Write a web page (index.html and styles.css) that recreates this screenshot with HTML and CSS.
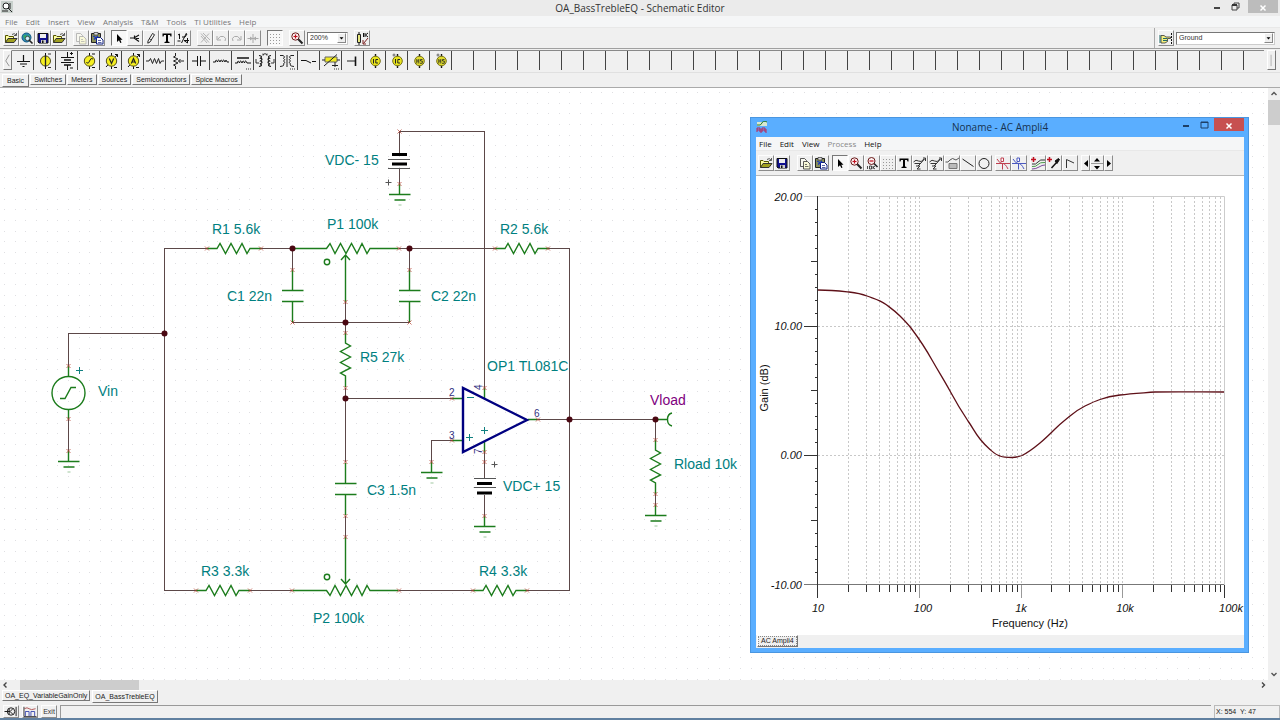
FILE: index.html
```html
<!DOCTYPE html>
<html lang="en">
<head>
<meta charset="utf-8">
<title>OA_BassTrebleEQ - Schematic Editor</title>
<link rel="stylesheet" href="styles.css">
</head>
<body>
<svg class="defs" aria-hidden="true">
  <defs>
    <symbol id="i-open" viewBox="0 0 16 16"><path d="M2.500 12.500V5.500H5L6 6.500H10.500V8" fill="#ffffa0" stroke="#555500"/><path d="M2.500 12.500L5 8.500H14L11 12.500Z" fill="#a0a020" stroke="#333"/><path d="M9 4.500Q11.500 2.500 13 5M13.500 3V5.500H11" fill="none" stroke="#333" stroke-width=".8"/></symbol>
    <symbol id="i-web" viewBox="0 0 16 16"><circle cx="7.500" cy="7.500" r="4.500" fill="#2a86b8" stroke="#145a80"/><path d="M4 6Q7 3 8 6T6 10ZM9 4L11 7L9 8Z" fill="#2faa6a"/><circle cx="8.500" cy="8.500" r="2.200" fill="#cfeef8" stroke="#333" stroke-width=".8"/><path d="M10 10L13.500 13.500" stroke="#222" stroke-width="1.600"/></symbol>
    <symbol id="i-save" viewBox="0 0 16 16"><path d="M3 3.500H13V13H4L3 12Z" fill="#101090" stroke="#111"/><path d="M5 4H11V8H5Z" fill="#eee"/><path d="M6 10H11V13H6Z" fill="#ccc"/><path d="M7 10.500H8.500V13H7Z" fill="#111"/></symbol>
    <symbol id="i-copy" viewBox="0 0 16 16"><path d="M3.500 3.500H7.500L9.500 5.500V11.500H3.500Z" fill="#f8f8f0" stroke="currentColor" stroke-width=".8"/><path d="M6.500 6.500H10.500L13 9V14H6.500Z" fill="#f8f8d8" stroke="currentColor" stroke-width=".8"/><path d="M8 9.500H10M8 11.500H11.500" stroke="currentColor" stroke-width=".7"/></symbol>
    <symbol id="i-paste" viewBox="0 0 16 16"><path d="M2.500 3.500H11.500V12.500H2.500Z" fill="#8a8f58" stroke="#222"/><path d="M5 2.500H9V5H5Z" fill="#ddd" stroke="#333" stroke-width=".7"/><path d="M7.500 7.500H11.500L14 10V14H7.500Z" fill="#fff" stroke="#102080"/><path d="M4 6L8 8M5 9.500L9 6" stroke="#1838c0" stroke-width="1.200"/><path d="M9 10.500H12M9 12.500H12.500" stroke="#102080" stroke-width=".7"/></symbol>
    <symbol id="i-arrow" viewBox="0 0 16 16"><path d="M6 4V12L8 10.300L9.300 13L10.500 12.400L9.300 9.800H11.500Z" fill="#000"/></symbol>
    <symbol id="i-node" viewBox="0 0 16 16"><path d="M3 8H7L12 5M7 8L12 11.500M7.500 5.500V8M9 8.500H12" fill="none" stroke="#111" stroke-width="1.200"/></symbol>
    <symbol id="i-pencil" viewBox="0 0 16 16"><path d="M5 11L9.500 3.500L11.500 4.700L7 12L4.800 13.200Z" fill="#fff" stroke="#111" stroke-width=".9"/><path d="M6 8.500L8.500 10" stroke="#111" stroke-width=".7"/></symbol>
    <symbol id="i-text" viewBox="0 0 16 16"><path d="M3.500 3.500H12.500V6.500H11.500L11 5H9V11.500L10.500 12V13H5.500V12L7 11.500V5H5L4.500 6.500H3.500Z" fill="#000"/></symbol>
    <symbol id="i-eq" viewBox="0 0 16 16"><path d="M3 5L4.500 4V9M11.500 3L6.500 13M7 7L10 7L12 4M9 10.500H14M12.500 8V13L9 10.500M2.500 11H5.500" fill="none" stroke="#111" stroke-width="1"/></symbol>
    <symbol id="i-cut" viewBox="0 0 16 16"><path d="M4 3.500L12 12.500M12 3.500L4 12.500M4 6L10 13M6 3L13 10" fill="none" stroke="#b4b4b4"/></symbol>
    <symbol id="i-undo" viewBox="0 0 16 16"><path d="M4 6V10H8M4.500 9.500Q7 5 10.500 6.500T12 11" fill="none" stroke="#aaa"/></symbol>
    <symbol id="i-redo" viewBox="0 0 16 16"><path d="M12 6V10H8M11.500 9.500Q9 5 5.500 6.500T4 11" fill="none" stroke="#aaa"/></symbol>
    <symbol id="i-flip" viewBox="0 0 16 16"><path d="M2.500 8.500H13.500M8 4V13" stroke="#aaa"/><path d="M5 6.500L8 8.500L5 10.500ZM11 6.500L8 8.500L11 10.500Z" fill="#aaa"/></symbol>
    <symbol id="i-grid" viewBox="0 0 16 16"><path d="M3 4.500H14M3 7.500H14M3 10.500H14M3 13.500H14" stroke="#999" stroke-dasharray="1 2"/></symbol>
    <symbol id="i-zoomin" viewBox="0 0 16 16"><circle cx="6.500" cy="6.500" r="3.700" fill="#fbeeee" stroke="#6a1a1a"/><path d="M4.500 6.500H8.500M6.500 4.500V8.500" stroke="#c01020" stroke-width="1.200"/><path d="M9.300 9.300L13.500 13.500" stroke="#222" stroke-width="2"/></symbol>
    <symbol id="i-zoomout" viewBox="0 0 16 16"><circle cx="7.500" cy="6" r="3.500" fill="#fbeeee" stroke="#6a1a1a"/><path d="M5.500 6H9.500" stroke="#c01020" stroke-width="1.200"/><path d="M10 8.500L13.500 12" stroke="#222" stroke-width="1.600"/><path d="M3.500 11V14M5.500 11H7.500V14H5.500ZM9 11V14M9 12.500L11 11M9 12.500L11 14" fill="none" stroke="#222" stroke-width=".8"/></symbol>
    <symbol id="i-part" viewBox="0 0 16 16"><path d="M3.500 4.500H6.500V12.500H3.500Z" fill="#e8e880" stroke="#222"/><path d="M5 2V4M5 13V15M9.500 3V7M11 3V7M14 3L11.500 5L14 7" fill="none" stroke="#111"/><path d="M14 8L9.500 13.500M9 10V14H12" fill="none" stroke="#7a2020"/></symbol>
    <symbol id="i-hand" viewBox="0 0 16 16"><path d="M3 5.500H6L8 7H12.500V8.500H9.500V11.500L7 13H3Z" fill="#f4f080" stroke="#333" stroke-width=".8"/><path d="M5 8.500H9M5 10.500H9M2 5V13" stroke="#206a6a"/><path d="M13.500 3V14" stroke="#111" stroke-dasharray="2 1"/></symbol>
    <symbol id="i-fx" viewBox="0 0 16 16"><path d="M1.500 7Q4 4 6.500 6T12 4M8 9L13 3.500M11 3H13.500V6M2.500 8.500H9M4 11H8L5 14H8.500M9 8L6 11" fill="none" stroke="#333" stroke-width="1"/></symbol>
    <symbol id="i-legend" viewBox="0 0 16 16"><path d="M1.500 7Q4 8 6 5T12 5L15 3" fill="none" stroke="#555"/><path d="M5 8.500H13V13.500H5Z" fill="#bbb" stroke="#777"/></symbol>
    <symbol id="i-line" viewBox="0 0 16 16"><path d="M2.500 4L13.500 11.500" stroke="#222"/></symbol>
    <symbol id="i-circle" viewBox="0 0 16 16"><circle cx="8" cy="8.500" r="5" fill="none" stroke="#222"/></symbol>
    <symbol id="i-cursor" viewBox="0 0 16 16"><path d="M1 8.500H15M7.500 8V14.500M2 4Q5 9 7.500 8.500T13 14" fill="none" stroke="currentColor"/><path d="M6 3H8.500V6.500H6Z" fill="#fff" stroke="currentColor"/></symbol>
    <symbol id="i-curves" viewBox="0 0 16 16"><path d="M1 4.500H6M3.500 2V7" stroke="#c01020" stroke-width="1.500"/><path d="M2 9Q6 10 8 7T15 5" fill="none" stroke="#333"/><path d="M2 11.500Q6 12 8 9.500T15 7.500" fill="none" stroke="#4a9a4a"/><path d="M2 14Q6 14 9 12T15 10" fill="none" stroke="#7a4a9a"/></symbol>
    <symbol id="i-dropper" viewBox="0 0 16 16"><path d="M1 4.500H6M3.500 2V7" stroke="#c01020" stroke-width="1.500"/><path d="M5.500 13L11 7" stroke="#111" stroke-width="1.500"/><path d="M9 6L12.500 3.500L13.500 4.500L11 8.500Z" fill="#111" stroke="#111"/></symbol>
    <symbol id="i-angle" viewBox="0 0 16 16"><path d="M4.500 13V4.500L12 8" fill="none" stroke="#333"/></symbol>

    <symbol id="p-ground" viewBox="0 0 22 22"><path d="M11.500 5V11.500M5 11.500H18M8 14H15M10.500 16.500H12.500" stroke="#111" stroke-width="1.200"/></symbol>
    <symbol id="p-isrc" viewBox="0 0 22 22"><path d="M11.500 3V19" stroke="#111"/><circle cx="11.500" cy="11" r="5" fill="#f4ee20" stroke="#55501a"/><path d="M11.500 5V17" stroke="#222" stroke-width="1.300"/><path d="M14 4H17M14 17.500H17" stroke="#333"/></symbol>
    <symbol id="p-batt" viewBox="0 0 22 22"><path d="M11.500 2V7M11.500 15V20M5 7.500H18M5 12.500H18M14 3.500H17M15.500 2V5M14 18H17" stroke="#111"/><path d="M8 10H15M8 15H15" stroke="#111" stroke-width="1.600"/></symbol>
    <symbol id="p-sine" viewBox="0 0 22 22"><path d="M11.500 3V19M14 4H17M14 17.500H17" stroke="#111"/><circle cx="11.500" cy="11" r="5.200" fill="#f4ee20" stroke="#55501a"/><path d="M8.500 12Q10 15 11.500 11T15 9" fill="none" stroke="#222"/></symbol>
    <symbol id="p-volt" viewBox="0 0 22 22"><path d="M11.500 3V19M14 17.500H17M6 17L17.500 4.500M15 4.500H17.500V7" fill="none" stroke="#111"/><circle cx="11.500" cy="11" r="5.200" fill="#f4ee20" stroke="#55501a"/><path d="M9.300 8.500L11.500 13.500L13.700 8.500" fill="none" stroke="#222" stroke-width="1.200"/></symbol>
    <symbol id="p-amp" viewBox="0 0 22 22"><path d="M11.500 3V19M14 17.500H17M6 17L17.500 4.500M15 4.500H17.500V7" fill="none" stroke="#111"/><circle cx="11.500" cy="11" r="5.200" fill="#f4ee20" stroke="#55501a"/><path d="M9.300 13.500L11.500 8.500L13.700 13.500M10 12H13" fill="none" stroke="#222" stroke-width="1.200"/></symbol>
    <symbol id="p-res" viewBox="0 0 22 22"><path d="M2 11H5L6.500 8.500L8.500 13.500L10.500 8.500L12.500 13.500L14.500 8.500L16 13.500L17.500 11H20" fill="none" stroke="#222"/></symbol>
    <symbol id="p-pot" viewBox="0 0 22 22"><path d="M9.500 3V6L7.500 7L12 9L7.500 11L12 13L7.500 15L9.500 16V19M18 11H12.500M14.500 9L12.500 11L14.500 13" fill="none" stroke="#222"/></symbol>
    <symbol id="p-cap" viewBox="0 0 22 22"><path d="M4 11H9.500M12.500 11H18M9.500 6V16M12.500 6V16" stroke="#111"/></symbol>
    <symbol id="p-ind" viewBox="0 0 22 22"><path d="M3 12H5.500Q6 8 7.500 12Q8.500 8 10 12Q11 8 12.500 12Q13.500 8 15 12Q16 8 17 12H19" fill="none" stroke="#111"/></symbol>
    <symbol id="p-core" viewBox="0 0 22 22"><path d="M5 8H17" stroke="#111" stroke-width="1.500"/><path d="M3 13H5.500Q6 9 7.500 13Q8.500 9 10 13Q11 9 12.500 13Q13.500 9 15 13H19" fill="none" stroke="#111"/><path d="M14 19H20" stroke="#333" stroke-dasharray="1 1"/></symbol>
    <symbol id="p-xfm" viewBox="0 0 22 22"><path d="M5 5.500Q9 6 6.500 8.200Q9.500 9 6.500 11Q9.500 12 6.500 13.800Q9 16 5 16.500M17 5.500Q13 6 15.500 8.200Q12.500 9 15.500 11Q12.500 12 15.500 13.800Q13 16 17 16.500" fill="none" stroke="#111" stroke-width="1.200"/><path d="M2 9V13H5M20 9V13H17M9 5Q11 2 13 5M9 3.500V5.500M13 3.500V5.500" fill="none" stroke="#333"/></symbol>
    <symbol id="p-xfm2" viewBox="0 0 22 22"><path d="M4 5.500H7Q10 6.500 7.500 8.500Q10 9.500 7.500 11Q10 12 7.500 14Q9 16 4 16.500M18 5.500H15Q12 6.500 14.500 8.500Q12 9.500 14.500 11Q12 12 14.500 14Q13 16 18 16.500M11 5V17" fill="none" stroke="#222"/><path d="M14 19H20" stroke="#333" stroke-dasharray="1 1"/></symbol>
    <symbol id="p-switch" viewBox="0 0 22 22"><path d="M3 10.500H8L13 13M14 11.500H18" fill="none" stroke="#111"/></symbol>
    <symbol id="p-relay" viewBox="0 0 22 22"><path d="M5 7H17V12H5Z" fill="#f0ea20" stroke="#666"/><path d="M4 16L17 4.500M2 10H5M17 10H20M12 15.500H18M15 12V17" stroke="#222"/><path d="M14 19H20" stroke="#333" stroke-dasharray="1 1"/></symbol>
    <symbol id="p-jump" viewBox="0 0 22 22"><path d="M5 11H13" stroke="#222"/><path d="M13.500 6.500V16" stroke="#111" stroke-width="1.600"/></symbol>
    <symbol id="p-ic" viewBox="0 0 22 22"><path d="M11.500 4V18" stroke="#111" stroke-width="1.400"/><circle cx="11.500" cy="11" r="4.800" fill="#e8e41c" stroke="#77701a"/><path d="M9.500 9V13.500M14 9.500H11.800V13H14" fill="none" stroke="#222"/></symbol>
    <symbol id="p-hs" viewBox="0 0 22 22"><path d="M11.500 4V18" stroke="#111" stroke-width="1.400"/><circle cx="11.500" cy="11" r="4.800" fill="#e0dc2c" stroke="#77701a"/><path d="M8.800 9V13.500M8.800 11H10.800M10.800 9V13.500M14.500 9.500H12.500V11H14.300V13.300H12" fill="none" stroke="#222" stroke-width=".8"/></symbol>
    <symbol id="p-dot" viewBox="0 0 22 22"><circle cx="8" cy="5" r="1.500" fill="#888"/></symbol>

    <path id="resistor" d="M-27 0H-17L-14-5L-8.500 5L-3-5L2.500 5L8-5L13 5L16 0H27"/>
    <path id="pot" d="M-53 0H-19L-15.500-5L-10.500 5L-5-5L.500 5L6-5L11.500 5L16.500-5L21.500 5L24.500 0H53"/>
    <path id="capacitor" d="M0-26V-5.500M-10.500-5.500H11M-10.500 5.500H11M0 5.500V26"/>
    <g id="ground"><path d="M0 0V10.500M-10.500 10.500H11M-5 16H6"/><path d="M-1 21H2" opacity=".3"/></g>
    <path id="pin" d="M-2-2L2 2M-2 2L2-2"/>
    <pattern id="dots" width="32" height="32" patternUnits="userSpaceOnUse"><path d="M4 4.500H5M15 4.500H16M25 4.500H26M4 15.500H5M15 15.500H16M25 15.500H26M4 25.500H5M15 25.500H16M25 25.500H26" stroke="#dfdfe2"/></pattern>
    <path id="decade-grid" d="M30.500 0V388M48.500 0V388M61.500 0V388M71.500 0V388M79.500 0V388M86.500 0V388M92.500 0V388M97.500 0V388"/>
    <path id="decade-ticks" d="M30.500 0V7M48.500 0V7M61.500 0V7M71.500 0V7M79.500 0V7M86.500 0V7M92.500 0V7M97.500 0V7"/>
    <path id="gain-ticks" d="M0 13.500H-3M0 26.500H-3M0 39.500H-3M0 52.500H-3M0 65.500H-7M0 78.500H-3M0 91.500H-3M0 104.500H-3M0 117.500H-3"/>
  </defs>
</svg>

<header class="titlebar">
  <svg class="app-icon" viewBox="0 0 12 12"><path d="M0 0H12V12H0Z" fill="#c8d0cc"/><circle cx="5" cy="5" r="3" fill="#fff" stroke="#222"/><path d="M1 10H7M7 7L11 11M9 2V8" stroke="#222"/></svg>
  <h1 class="title">OA_BassTrebleEQ - Schematic Editor</h1>
  <div class="win-buttons">
    <button class="win-btn" aria-label="Minimize"><svg viewBox="0 0 10 10"><path d="M2 7H8" stroke="#444" stroke-width="2"/></svg></button>
    <button class="win-btn" aria-label="Restore"><svg viewBox="0 0 10 10"><path d="M2 4H7V9H2ZM4 4V2H9V7H7" fill="none" stroke="#444"/><path d="M2 4H7" stroke="#333" stroke-width="2"/></svg></button>
    <button class="win-btn close" aria-label="Close"><svg viewBox="0 0 10 10"><path d="M2.500 3.500L7.500 8.500M7.500 3.500L2.500 8.500" stroke="#fff" stroke-width="1.500"/></svg></button>
  </div>
</header>

<nav class="menubar">
  <button>File</button><button>Edit</button><button>Insert</button><button>View</button><button>Analysis</button><button>T&amp;M</button><button>Tools</button><button>TI Utilities</button><button>Help</button>
</nav>

<div class="toolbar" role="toolbar" aria-label="Editing">
  <div class="group">
    <button class="tool" aria-label="Open"><svg><use href="#i-open"/></svg></button>
    <button class="tool" aria-label="Open from web"><svg><use href="#i-web"/></svg></button>
    <button class="tool" aria-label="Save"><svg><use href="#i-save"/></svg></button>
    <button class="tool" aria-label="Close"><svg><use href="#i-open"/></svg></button>
  </div>
  <div class="group">
    <button class="tool dim" aria-label="Copy"><svg><use href="#i-copy"/></svg></button>
    <button class="tool" aria-label="Paste"><svg><use href="#i-paste"/></svg></button>
  </div>
  <div class="group">
    <button class="tool pressed" aria-label="Select"><svg><use href="#i-arrow"/></svg></button>
    <button class="tool" aria-label="Last component"><svg><use href="#i-node"/></svg></button>
    <button class="tool" aria-label="Wire"><svg><use href="#i-pencil"/></svg></button>
    <button class="tool" aria-label="Text"><svg><use href="#i-text"/></svg></button>
    <button class="tool" aria-label="Rotate"><svg><use href="#i-eq"/></svg></button>
  </div>
  <div class="group">
    <button class="tool" aria-label="Delete"><svg><use href="#i-cut"/></svg></button>
    <button class="tool" aria-label="Rotate left"><svg><use href="#i-undo"/></svg></button>
    <button class="tool" aria-label="Rotate right"><svg><use href="#i-redo"/></svg></button>
    <button class="tool" aria-label="Mirror"><svg><use href="#i-flip"/></svg></button>
  </div>
  <div class="group">
    <button class="tool pressed" aria-label="Grid"><svg><use href="#i-grid"/></svg></button>
  </div>
  <div class="group">
    <button class="tool" aria-label="Zoom"><svg><use href="#i-zoomin"/></svg></button>
    <label class="combo zoom"><select aria-label="Zoom level"><option>200%</option></select><svg viewBox="0 0 9 10"><path d="M2 4H7L4.500 7Z"/></svg></label>
  </div>
  <div class="group">
    <button class="tool" aria-label="Find component"><svg><use href="#i-part"/></svg></button>
  </div>
  <div class="group finder">
    <button class="tool" aria-label="Insert component"><svg><use href="#i-hand"/></svg></button>
    <label class="combo wide"><select aria-label="Component"><option>Ground</option></select><svg viewBox="0 0 9 10"><path d="M2 4H7L4.500 7Z"/></svg></label>
  </div>
</div>

<div class="palette" role="toolbar" aria-label="Components">
  <button class="handle" aria-label="Scroll left"><svg viewBox="0 0 8 20"><path d="M6 4L2 11L6 17" fill="none" stroke="#888"/></svg></button>
  <div class="cells">
    <button aria-label="Ground"><svg><use href="#p-ground"/></svg></button>
    <button aria-label="Current source"><svg><use href="#p-isrc"/></svg></button>
    <button aria-label="Battery"><svg><use href="#p-batt"/></svg></button>
    <button aria-label="Voltage generator"><svg><use href="#p-sine"/></svg></button>
    <button aria-label="Voltmeter"><svg><use href="#p-volt"/></svg></button>
    <button aria-label="Ammeter"><svg><use href="#p-amp"/></svg></button>
    <button aria-label="Resistor"><svg><use href="#p-res"/></svg></button>
    <button aria-label="Potentiometer"><svg><use href="#p-pot"/></svg></button>
    <button aria-label="Capacitor"><svg><use href="#p-cap"/></svg></button>
    <button aria-label="Inductor"><svg><use href="#p-ind"/></svg></button>
    <button aria-label="Coupled inductor"><svg><use href="#p-core"/></svg></button>
    <button aria-label="Transformer"><svg><use href="#p-xfm"/></svg></button>
    <button aria-label="Ideal transformer"><svg><use href="#p-xfm2"/></svg></button>
    <button aria-label="Switch"><svg><use href="#p-switch"/></svg></button>
    <button aria-label="Controlled source"><svg><use href="#p-relay"/></svg></button>
    <button aria-label="Jumper"><svg><use href="#p-jump"/></svg></button>
    <button aria-label="Initial condition"><svg><use href="#p-ic"/></svg></button>
    <button aria-label="Initial condition 2"><svg><use href="#p-ic"/><use href="#p-dot"/></svg></button>
    <button aria-label="Node set"><svg><use href="#p-hs"/></svg></button>
    <button aria-label="Node set 2"><svg><use href="#p-hs"/><use href="#p-dot"/></svg></button>
  </div>
  <button class="handle" aria-label="Scroll right"><svg viewBox="0 0 8 20"><path d="M3.500 4V17" stroke="#aaa"/></svg></button>
</div>

<div class="tabs" role="tablist">
  <button class="tab active" role="tab">Basic</button><button class="tab" role="tab">Switches</button><button class="tab" role="tab">Meters</button><button class="tab" role="tab">Sources</button><button class="tab" role="tab">Semiconductors</button><button class="tab" role="tab">Spice Macros</button>
</div>

<div class="workspace">
  <main class="canvas">
    <svg class="schematic" role="img" aria-label="Bass and treble equalizer circuit">
      <rect width="100%" height="100%" fill="url(#dots)"/>
      <g transform="translate(0 -88)">
        <g class="wires">
          <path d="M68.500 366V333.500H164.500M207 248.500H164.500V590.500H196M261 248.500H292M399 248.500H495M548 248.500H569.500V590.500H527M250 590.500H292M399 590.500H473"/>
          <path d="M399.500 153V131.500H484.500V388M399.500 169V184M292 322.500H409M345.500 302V333M345.500 388V462M345.500 516V537M345.500 398.500H452M452 440.500H431.500V462M537 419.500H656M655.500 419V440M484.500 452V478M484.500 495V516M68.500 419V451M292.500 248V270M409.500 248V270M655.500 494V505"/>
        </g>
        <g class="parts">
          <use href="#resistor" x="234" y="248.500"/><use href="#resistor" x="522" y="248.500"/><use href="#resistor" x="223" y="590.500"/><use href="#resistor" x="500" y="590.500"/>
          <use href="#resistor" transform="translate(345.500 360) rotate(90)"/><use href="#resistor" transform="translate(655.500 467) rotate(90)"/>
          <use href="#pot" x="345.500" y="248.500"/><use href="#pot" transform="translate(345.500 590.500) scale(1 -1)"/>
          <path d="M345.500 302V255M341 260L345.500 255L350 260M345.500 537V584M341 579L345.500 584L350 579"/>
          <circle cx="327" cy="262" r="2.700"/><circle cx="327" cy="577" r="2.700"/>
          <use href="#capacitor" x="292.500" y="296"/><use href="#capacitor" x="409.500" y="296"/><use href="#capacitor" x="345.500" y="489"/>
          <use href="#ground" x="68.500" y="451"/><use href="#ground" x="399.500" y="184"/><use href="#ground" x="431.500" y="462"/><use href="#ground" x="484.500" y="516"/><use href="#ground" x="655.500" y="505"/>
          <circle cx="68.500" cy="393" r="16.500"/><path d="M60 398.500H65L71 387.500H76M68.500 366V376M68.500 410V419"/>
          <path d="M452 398.500H462M452 440.500H462M528 419.500H537M484.500 388V398M484.500 442V452M656 419.500H667M672 413Q667.500 414 667.500 419.500T672 426"/>
        </g>
        <path class="opamp" d="M463 388V452L527 420Z"/>
        <g class="marks"><path d="M76 370.500H83M79.500 367V374M467 397.500H474M466 437.500H473M469.500 434V441M481 430.500H488M484.500 427V434"/></g>
        <g class="battery-bars">
          <path class="thin" d="M388 159.500H410M388 168.500H410M474 478.500H496M474 487.500H496M385.500 182.500H391.500M388.500 179.500V185.500M491.500 464.500H497.500M494.500 461.500V467.500"/>
          <path class="thick" d="M392 154.500H407M392 164H407M477 483.500H492M477 493H492"/>
        </g>
        <g class="pins">
          <use href="#pin" x="207" y="248.500"/><use href="#pin" x="261" y="248.500"/><use href="#pin" x="399" y="248.500"/><use href="#pin" x="495" y="248.500"/><use href="#pin" x="548" y="248.500"/>
          <use href="#pin" x="196" y="590.500"/><use href="#pin" x="250" y="590.500"/><use href="#pin" x="292" y="590.500"/><use href="#pin" x="399" y="590.500"/><use href="#pin" x="473" y="590.500"/><use href="#pin" x="527" y="590.500"/>
          <use href="#pin" x="399.500" y="131.500"/><use href="#pin" x="399.500" y="184"/><use href="#pin" x="292.500" y="270"/><use href="#pin" x="409.500" y="270"/><use href="#pin" x="292.500" y="322.500"/><use href="#pin" x="409.500" y="322.500"/>
          <use href="#pin" x="345.500" y="302"/><use href="#pin" x="345.500" y="333"/><use href="#pin" x="345.500" y="388"/><use href="#pin" x="345.500" y="462"/><use href="#pin" x="345.500" y="516"/><use href="#pin" x="345.500" y="537"/>
          <use href="#pin" x="68.500" y="366"/><use href="#pin" x="68.500" y="419"/><use href="#pin" x="68.500" y="451"/><use href="#pin" x="452" y="398.500"/><use href="#pin" x="452" y="440.500"/><use href="#pin" x="431.500" y="462"/><use href="#pin" x="538" y="419.500"/>
          <use href="#pin" x="484.500" y="388"/><use href="#pin" x="484.500" y="452"/><use href="#pin" x="484.500" y="462"/><use href="#pin" x="484.500" y="516"/><use href="#pin" x="655.500" y="440"/><use href="#pin" x="655.500" y="494"/><use href="#pin" x="655.500" y="505"/>
        </g>
        <g class="nodes"><circle cx="164.500" cy="333.500" r="3"/><circle cx="292.500" cy="248.500" r="3"/><circle cx="409.500" cy="248.500" r="3"/><circle cx="345.500" cy="322.500" r="3"/><circle cx="345.500" cy="398.500" r="3"/><circle cx="569.500" cy="419.500" r="3"/><circle cx="655.500" cy="419.500" r="3"/></g>
        <g class="labels">
          <text x="212" y="234">R1 5.6k</text><text x="327" y="229">P1 100k</text><text x="500" y="234">R2 5.6k</text><text x="325" y="165">VDC- 15</text>
          <text x="227" y="301">C1 22n</text><text x="431" y="301">C2 22n</text><text x="360" y="362">R5 27k</text><text x="487" y="371">OP1 TL081C</text>
          <text x="98" y="396">Vin</text><text x="367" y="495">C3 1.5n</text><text x="503" y="491">VDC+ 15</text><text x="674" y="469">Rload 10k</text>
          <text x="201" y="576">R3 3.3k</text><text x="479" y="576">R4 3.3k</text><text x="313" y="623">P2 100k</text>
          <text class="probe" x="650" y="405">Vload</text>
        </g>
        <g class="pin-numbers">
          <text x="449" y="396">2</text><text x="449" y="439">3</text><text x="534" y="417">6</text>
          <text transform="translate(482 390) rotate(-90)">4</text><text transform="translate(482 454) rotate(-90)">7</text>
        </g>
      </g>
    </svg>

    <section class="window" aria-label="Noname - AC Ampli4">
      <header class="window-title">
        <svg class="app-icon" viewBox="0 0 12 12"><path d="M1 1H11V5H1Z" fill="#d8e8d0"/><path d="M1 4Q5 5 6 2T11 1" fill="none" stroke="#2a7a2a"/><path d="M1 11V7H4V11H6V7H9V11H11M1 9H11" fill="none" stroke="#b8285a"/></svg>
        <h2 class="title">Noname - AC Ampli4</h2>
        <div class="win-buttons">
          <button class="win-btn" aria-label="Minimize"><svg viewBox="0 0 10 10"><path d="M2 7H8" stroke="#1d3f66" stroke-width="2"/></svg></button>
          <button class="win-btn" aria-label="Maximize"><svg viewBox="0 0 10 10"><path d="M2 3H9V9H2ZM2 3.500H9" fill="none" stroke="#1d3f66"/></svg></button>
          <button class="win-btn close red" aria-label="Close"><svg viewBox="0 0 10 10"><path d="M2.500 3.500L7.500 8.500M7.500 3.500L2.500 8.500" stroke="#fff" stroke-width="1.500"/></svg></button>
        </div>
      </header>
      <nav class="menubar inner">
        <button>File</button><button>Edit</button><button>View</button><button disabled>Process</button><button>Help</button>
      </nav>
      <div class="toolbar inner" role="toolbar" aria-label="Diagram">
        <div class="group files">
          <button class="tool" aria-label="Open"><svg><use href="#i-open"/></svg></button>
          <button class="tool" aria-label="Save"><svg><use href="#i-save"/></svg></button>
        </div>
        <div class="group">
          <button class="tool" aria-label="Copy"><svg><use href="#i-copy"/></svg></button>
          <button class="tool" aria-label="Paste"><svg><use href="#i-paste"/></svg></button>
        </div>
        <div class="group">
          <button class="tool pressed" aria-label="Select"><svg><use href="#i-arrow"/></svg></button>
          <button class="tool" aria-label="Zoom in"><svg><use href="#i-zoomin"/></svg></button>
          <button class="tool" aria-label="Zoom 100%"><svg><use href="#i-zoomout"/></svg></button>
          <button class="tool" aria-label="Grid"><svg><use href="#i-grid"/></svg></button>
          <button class="tool" aria-label="Text"><svg><use href="#i-text"/></svg></button>
          <button class="tool" aria-label="X label"><svg><use href="#i-fx"/></svg></button>
          <button class="tool" aria-label="Y label"><svg><use href="#i-fx"/></svg></button>
          <button class="tool" aria-label="Legend"><svg><use href="#i-legend"/></svg></button>
          <button class="tool" aria-label="Line"><svg><use href="#i-line"/></svg></button>
          <button class="tool" aria-label="Ellipse"><svg><use href="#i-circle"/></svg></button>
        </div>
        <div class="group">
          <button class="tool cursor-a" aria-label="Cursor a"><svg><use href="#i-cursor"/></svg></button>
          <button class="tool cursor-b" aria-label="Cursor b"><svg><use href="#i-cursor"/></svg></button>
        </div>
        <div class="group">
          <button class="tool" aria-label="Add curves"><svg><use href="#i-curves"/></svg></button>
          <button class="tool" aria-label="Pick curve"><svg><use href="#i-dropper"/></svg></button>
          <button class="tool" aria-label="Angle"><svg><use href="#i-angle"/></svg></button>
        </div>
        <div class="group">
          <button class="tool slim" aria-label="Left"><svg viewBox="0 0 9 16"><path d="M7 5V12L3 8.500Z"/></svg></button>
          <button class="tool spin" aria-label="Up or down"><svg viewBox="0 0 14 16"><path d="M4 6.500H10L7 3ZM4 11H10L7 14.500Z"/><path d="M1 8.500H13" stroke="#999"/></svg></button>
          <button class="tool slim" aria-label="Right"><svg viewBox="0 0 9 16"><path d="M3 5V12L7 8.500Z"/></svg></button>
        </div>
      </div>
      <svg class="chart" viewBox="756 176 488 459" role="img" aria-label="Gain against frequency">
        <g class="grid"><use href="#decade-grid" x="818" y="197"/><use href="#decade-grid" x="920" y="197"/><use href="#decade-grid" x="1021" y="197"/><use href="#decade-grid" x="1123" y="197"/><path d="M919.500 197V585M1021.500 197V585M1122.500 197V585M818 326.500H1224M818 455.500H1224"/></g>
        <path class="frame" d="M804 196.500H1224.500V585"/>
        <path class="base" d="M804 584.500H1224"/>
        <g class="axis"><path d="M817.500 196V598M804 326.500H818M804 455.500H818M1224.500 585V598"/><path class="soft" d="M919.500 585V598M1021.500 585V598M1122.500 585V598"/>
          <use href="#gain-ticks" x="818" y="196"/><use href="#gain-ticks" x="818" y="325"/><use href="#gain-ticks" x="818" y="455"/>
          <use href="#decade-ticks" x="818" y="585"/><use href="#decade-ticks" x="920" y="585"/><use href="#decade-ticks" x="1021" y="585"/><use href="#decade-ticks" x="1123" y="585"/></g>
        <path class="curve" d="M818 290C832 290 840 291 849 292C858 293 862 294 867 296C875 299 880 300 886 304.500C892 309 895 311 900 316C905 321 907 323 911 328C923 344 927 351 932 360C940 374 944 380 950 391C957 404 962 412 968 421C973 428 975 433 980 439C984 444 986 446 990 449.500C994 453 996 455 1000 456C1004 457.500 1008 457.500 1012 457.500C1016 457.500 1018 457 1022 455.500C1029 452 1034 448 1040 443C1046 438 1049 435 1055 429C1061 423 1064 421 1070 416C1076 411 1079 409 1085 406C1091 403 1094 401.500 1100 399.500C1107 397 1112 396 1120 395C1132 393.500 1143 393 1155 392C1178 391.500 1200 392 1224 392"/>
        <g class="scale">
          <text class="y" x="802" y="201">20.00</text><text class="y" x="802" y="330">10.00</text><text class="y" x="802" y="459">0.00</text><text class="y" x="802" y="589">-10.00</text>
          <text x="818" y="612">10</text><text x="923" y="612">100</text><text x="1021" y="612">1k</text><text x="1125" y="612">10k</text><text x="1231" y="612">100k</text>
        </g>
        <text class="axis-name" x="1030" y="627">Frequency (Hz)</text>
        <text class="axis-name" transform="translate(768 388) rotate(-90)">Gain (dB)</text>
      </svg>
      <div class="sheet-tabs" role="tablist"><button class="tab focus" role="tab">AC Ampli4</button></div>
    </section>
  </main>
  <div class="vscroll" aria-hidden="true"><svg viewBox="0 0 12 12"><path d="M3.500 7L6 4.500L8.500 7" fill="none" stroke="#555" stroke-width="1.400"/></svg><span class="thumb"></span><svg class="end" viewBox="0 0 12 12"><path d="M3.500 5L6 7.500L8.500 5" fill="none" stroke="#555" stroke-width="1.400"/></svg></div>
</div>
<div class="hscroll" aria-hidden="true"><svg viewBox="0 0 10 10"><path d="M6.500 2.500L4 5L6.500 7.500" fill="none" stroke="#444" stroke-width="1.400"/></svg><span class="thumb"></span><svg class="end" viewBox="0 0 10 10"><path d="M4 2.500L6.500 5L4 7.500" fill="none" stroke="#444" stroke-width="1.400"/></svg></div>

<div class="tabs docs" role="tablist">
  <button class="tab" role="tab">OA_EQ_VariableGainOnly</button><button class="tab active" role="tab">OA_BassTrebleEQ</button>
</div>

<footer class="status">
  <button class="tool" aria-label="Schematic"><svg viewBox="0 0 16 14"><circle cx="8" cy="7" r="4" fill="none" stroke="#111"/><path d="M1 7H7L10 4M7 7L10 10M6 4V10M13.500 2V12" fill="none" stroke="#111"/></svg></button>
  <button class="tool" aria-label="Diagram"><svg viewBox="0 0 16 14"><path d="M2 4Q5 2 7 4T14 4" fill="none" stroke="#b05050"/><path d="M1.500 2V12.500H15" fill="none" stroke="#333"/><path d="M3 12V7H7V12M9 12V7H13V12" fill="none" stroke="#3a4ab0"/></svg></button>
  <button class="tool exit">Exit</button>
  <div class="message"></div>
  <output class="coords">X: 554&nbsp; Y: 47</output>
</footer>
</body>
</html>
```
FILE: styles.css
```css
* { box-sizing: border-box; }

body {
  margin: 0;
  height: 100vh;
  display: flex;
  flex-direction: column;
  overflow: hidden;
  background: #f0f0f0;
  color: #222;
  font: 7px/10px "Liberation Sans", Arial, sans-serif;
}

button, select {
  margin: 0;
  padding: 0;
  border: 0;
  background: none;
  color: inherit;
  font: inherit;
}

svg { display: block; }

.defs { position: absolute; width: 0; height: 0; }

/* Title bars */
.titlebar, .window-title {
  display: grid;
  grid-template-columns: 1fr auto 1fr;
  background: #ebebeb;
}
.titlebar { height: 16px; }
.app-icon { width: 12px; height: 12px; margin: 1px; }
.title {
  margin: 0;
  font: 10px/16px "Open Sans", "Noto Sans", sans-serif;
  color: #333;
}
.win-buttons { display: flex; justify-content: flex-end; align-items: flex-start; gap: 8px; padding-right: 2px; }
.win-btn { width: 10px; height: 12px; }
.win-btn svg { width: 10px; height: 10px; margin: 0 auto; }
.win-btn.close { width: 30px; height: 13px; background: #bcbcbc; }
.win-btn.close.red { margin-left: -3px; background: #c75050; }

/* Menus */
.menubar {
  display: flex;
  gap: 8px;
  height: 12px;
  padding-left: 5px;
  background: #f5f6f7;
  border-bottom: 1px solid #e8e8e8;
  font: 8px/11px "Open Sans", "Noto Sans", sans-serif;
  color: #777;
}
.menubar.inner { height: 14px; padding-left: 3px; line-height: 13px; color: #111; }
.menubar button:disabled { color: #888; }

/* Tool buttons */
.toolbar { display: flex; align-items: center; gap: 6px; height: 21px; padding-left: 3px; border-bottom: 1px solid #a0a0a0; }
.toolbar.inner { height: 25px; gap: 3px; padding-left: 2px; border-bottom: 1px solid #b8b8b8; }
.group { display: flex; align-items: center; }
.files { margin-right: 4px; }
.tool {
  width: 16px;
  height: 16px;
  border: 1px solid;
  border-color: #fdfdfd #8c8c8c #8c8c8c #fdfdfd;
  color: #333;
}
.tool svg { width: 16px; height: 16px; margin: -1px; }
.tool.dim { color: #aaa; }
.tool.slim { width: 9px; }
.tool.slim svg { width: 9px; }
.tool.spin { width: 14px; }
.tool.spin svg { width: 14px; }
.tool.pressed { background: #f8f8f8; border-color: #777 #fdfdfd #fdfdfd #777; }
.tool.cursor-a { color: #c04050; }
.tool.cursor-b { color: #4a58c0; }

.combo {
  display: flex;
  align-items: center;
  height: 13px;
  margin-left: 2px;
  padding-right: 1px;
  background: #fff;
  border: 1px solid;
  border-color: #777 #ccc #ccc #777;
}
.combo select { flex: 1; min-width: 0; appearance: none; padding-left: 2px; line-height: 10px; color: #333; }
.combo svg { width: 9px; height: 10px; background: #eee; border: 1px solid; border-color: #fff #888 #888 #fff; pointer-events: none; }
.zoom { width: 41px; }
.wide { width: 99px; }
.finder { margin-left: auto; padding: 0 5px 0 3px; height: 100%; border-left: 1px solid #aaa; }

/* Component palette */
.palette { display: flex; height: 24px; padding: 1px 4px 2px 3px; border-bottom: 1px solid #e0e0e0; }
.handle { width: 9px; border: 1px solid; border-color: #fff #777 #777 #fff; }
.handle svg { width: 100%; height: 100%; }
.cells {
  flex: 1;
  display: flex;
  margin-right: 3px;
  border-top: 1px solid #888;
  background: repeating-linear-gradient(90deg, transparent 0 21px, #444 21px 22px);
}
.cells button { width: 22px; }
.cells svg { width: 22px; height: 22px; margin-top: -1px; }

/* Tabs */
.tabs { display: flex; align-items: flex-start; gap: 1px; height: 15px; padding: 1px 2px 0; border-bottom: 1px solid #aaa; }
.tab { height: 11px; padding: 0 3px; border: 1px solid; border-color: #fff #777 #777 #fff; line-height: 8px; white-space: nowrap; }
.tab.active { height: 13px; padding: 1px 4px 0; }
.tabs.docs { gap: 2px; padding-top: 0; border: 0; }
.tabs.docs .tab { padding: 0 2px; }
.tabs.docs .active { padding-top: 1px; }
.tab.focus { outline: 1px dotted #888; outline-offset: -2px; }

/* Workspace */
.workspace { flex: 1; min-height: 0; display: flex; }
.canvas { flex: 1; min-width: 0; position: relative; background: #fff; overflow: hidden; }
.schematic { width: 100%; height: 100%; }
.wires path { fill: none; stroke: #5c4848; shape-rendering: crispEdges; }
.parts { fill: none; stroke: #1c7c1c; stroke-width: 1.4; }
.opamp { fill: none; stroke: #000080; stroke-width: 2.4; }
.marks { stroke: #108080; }
.thin { stroke: #555; }
.thick { stroke: #000; stroke-width: 3; }
.pins { stroke: #b03a2a; stroke-width: 0.7; }
.nodes { fill: #4a0812; }
.labels { fill: #008080; font-size: 14px; }
.labels .probe { fill: #800080; }
.pin-numbers { fill: #303080; font-size: 10px; }

/* Diagram window, floating over the drawing */
.window {
  position: absolute;
  top: 29px;
  right: 19px;
  width: 499px;
  display: flex;
  flex-direction: column;
  border: 1px solid #4a96e0;
  padding: 0 4px 4px 5px;
  background: #5aaeff;
}
.window-title { height: 19px; background: none; }
.window-title .title { line-height: 19px; color: #17324f; }
.window-title .app-icon { margin: 3px 0; }
.window-title .win-buttons { padding: 0; }
.toolbar.inner, .sheet-tabs { background: #f0f0f0; }
.chart { width: 100%; background: #fff; }
.chart path, .chart use { fill: none; }
.grid { stroke: #c8c8c8; stroke-dasharray: 2 2; }
.frame { stroke: #ccc; }
.base { stroke: #777; }
.axis { stroke: #333; }
.axis .soft { stroke: #999; }
.curve { stroke: #5e1018; stroke-width: 1.3; }
.scale { font-size: 11px; font-style: italic; text-anchor: middle; fill: #111; }
.scale .y { text-anchor: end; }
.axis-name { font-size: 11px; text-anchor: middle; fill: #111; }
.sheet-tabs { height: 13px; padding-left: 1px; }
.sheet-tabs .tab { display: block; height: 12px; line-height: 10px; }

/* Scroll bars */
.vscroll { width: 12px; display: flex; flex-direction: column; background: #f0f0f0; }
.vscroll svg { width: 12px; height: 12px; }
.vscroll .thumb { height: 25px; background: #cdcdcd; }
.vscroll .end { margin-top: auto; }
.hscroll { height: 10px; display: flex; padding-right: 12px; }
.hscroll svg { width: 10px; height: 10px; }
.hscroll .thumb { width: 119px; margin-left: 10px; background: #cdcdcd; }
.hscroll .end { margin-left: auto; }

/* Status bar */
.status { display: flex; gap: 3px; height: 15px; padding-left: 3px; border-bottom: 2px solid #6080a0; }
.status .tool { height: 13px; }
.status .tool svg { height: 13px; }
.status .exit { line-height: 11px; }
.message { flex: 1; border-top: 1px solid #999; border-left: 1px solid #999; }
.coords { width: 66px; border: 1px solid #bbb; border-bottom: 0; line-height: 12px; padding-left: 1px; }
```
